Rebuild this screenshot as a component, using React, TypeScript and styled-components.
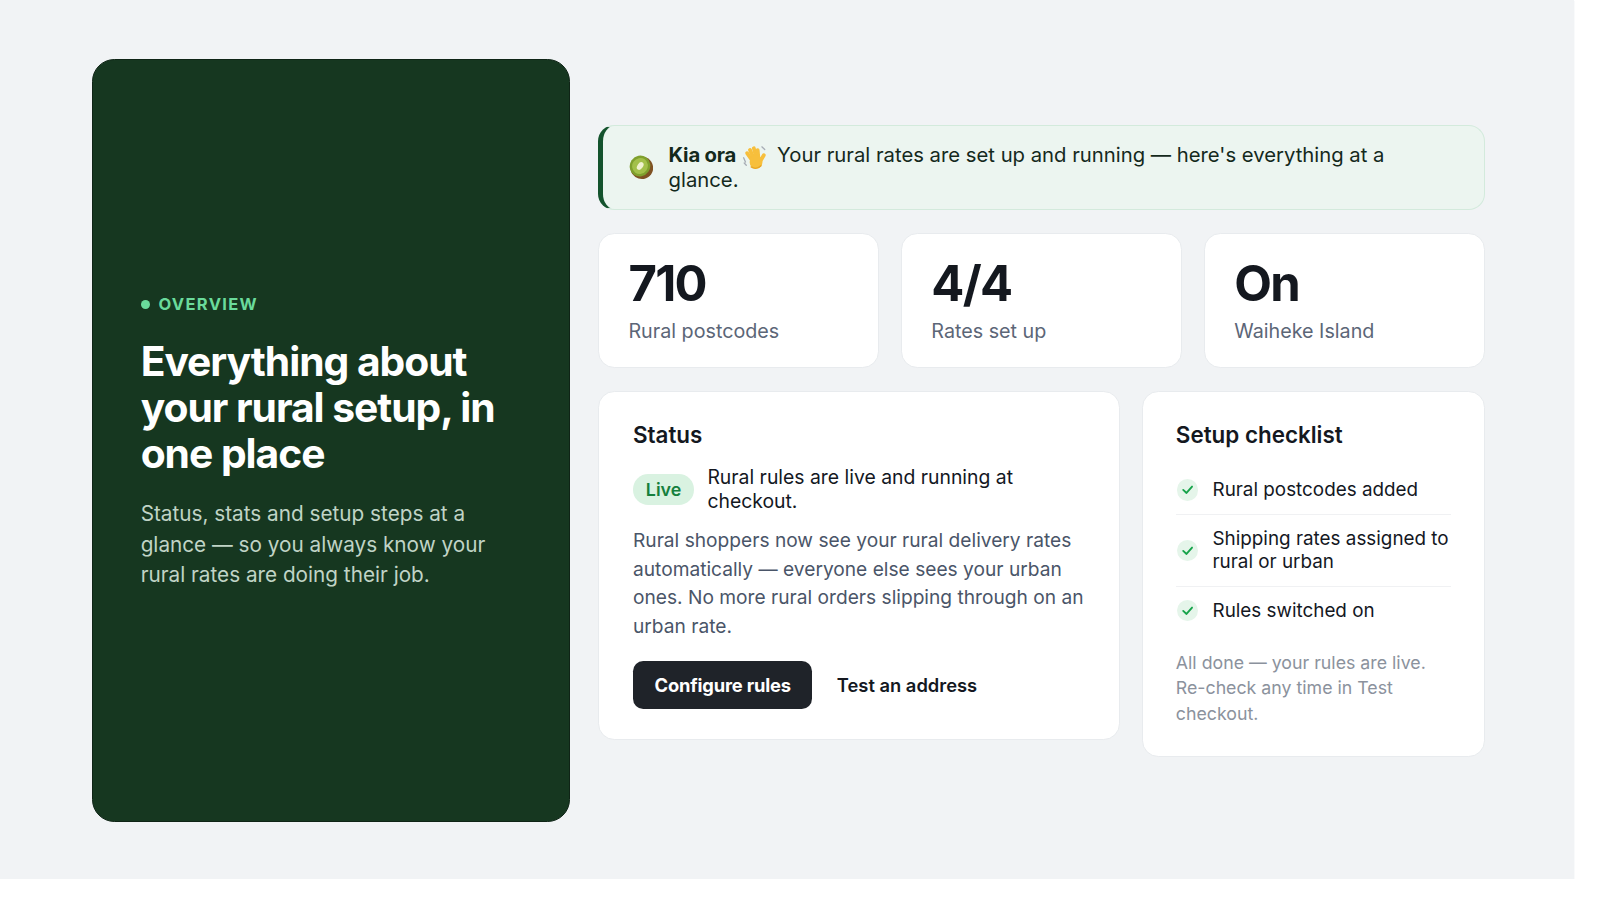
import React from "react";
import styled, { createGlobalStyle } from "styled-components";

const Global = createGlobalStyle`
  html, body { margin: 0; padding: 0; background: #fff; }
  body { font-family: Inter, "Noto Sans", sans-serif; color: #111827; }
  * { box-sizing: border-box; }
`;

const Page = styled.main`
  zoom: 1.0194;
  width: 1544.5px;
  height: 862.5px;
  background: #f1f3f5;
  box-shadow: 1px 1px 0 #f9fafb;
  padding: 2px 88px 0 90px;
  display: grid;
  grid-template-columns: 469px 870.5px;
  column-gap: 27px;
  align-items: center;
`;

const Hero = styled.section`
  height: 748px;
  background: #163720;
  border: 1px solid #0f2416;
  border-radius: 22px;
  padding: 2px 47px 0;
  display: flex;
  flex-direction: column;
  justify-content: center;
`;

const Eyebrow = styled.div`
  display: flex;
  align-items: center;
  gap: 8.5px;
  font-size: 16.2px;
  line-height: 22px;
  font-weight: 700;
  letter-spacing: 0.08em;
  color: #6adb9b;
  margin-bottom: 23px;
`;

const Dot = styled.span`
  width: 9px;
  height: 9px;
  border-radius: 50%;
  background: #6adb9b;
`;

const Heading = styled.h1`
  margin: 0 0 22px;
  font-size: 40px;
  line-height: 45px;
  font-weight: 700;
  letter-spacing: -0.025em;
  color: #fff;
`;

const Lede = styled.p`
  margin: 0;
  font-size: 20.35px;
  line-height: 29.6px;
  color: #c0d4c6;
`;

const Column = styled.div`
  margin-left: 1px;
  display: flex;
  flex-direction: column;
  gap: 22px;
`;

const Banner = styled.div`
  height: 84px;
  display: flex;
  align-items: center;
  gap: 15px;
  padding: 0 24px 0 25px;
  background: #ecf5f0;
  border: 1px solid #d3eadc;
  border-left: 5px solid #14532d;
  border-radius: 16px;
  font-size: 19.9px;
  color: #14291c;
`;

const BannerIcon = styled.svg`
  width: 24px;
  height: 24px;
  flex: none;
`;

const HandIcon = styled.svg`
  width: 24px;
  height: 24px;
  vertical-align: -3px;
  margin: -4px 5px -4px 0;
`;

const BannerText = styled.p`
  margin: 0;
  padding-top: 1px;
  line-height: 24px;
`;

const Strong = styled.strong`
  font-weight: 700;
  letter-spacing: -0.01em;
`;

const Stats = styled.div`
  display: grid;
  grid-template-columns: repeat(3, 1fr);
  gap: 22px;
`;

const Card = styled.div`
  background: #fff;
  border: 1px solid #e8ebee;
  border-radius: 16px;
`;

const StatCard = styled(Card)`
  height: 133px;
  padding: 21px 28.5px 0;
`;

const StatValue = styled.div`
  font-size: 48px;
  line-height: 56px;
  font-weight: 700;
  letter-spacing: -0.035em;
  color: #14181f;
`;

const StatLabel = styled.div`
  margin-top: 7px;
  font-size: 19.35px;
  line-height: 24px;
  color: #5c6677;
`;

const Lower = styled.div`
  display: grid;
  grid-template-columns: 511.5px 336px;
  gap: 22px;
  align-items: start;
`;

const StatusCard = styled(Card)`
  padding: 29px 33px 30px;
`;

const ChecklistCard = styled(Card)`
  padding: 29px 32px;
`;

const CardTitle = styled.h2<{ $gap: number }>`
  margin: 0 0 ${(p) => p.$gap}px;
  font-size: 22px;
  line-height: 28px;
  font-weight: 600;
  color: #14181f;
`;

const StatusRow = styled.div`
  display: flex;
  align-items: center;
  gap: 13px;
  font-size: 19px;
  line-height: 23px;
  color: #14181f;
  margin-bottom: 13px;
`;

const Pill = styled.span`
  flex: none;
  width: 60px;
  height: 30px;
  display: flex;
  align-items: center;
  justify-content: center;
  border-radius: 15px;
  background: #d9f2e1;
  color: #15803d;
  font-size: 17.5px;
  font-weight: 600;
`;

const Body = styled.p`
  margin: 0 0 20px;
  font-size: 18.8px;
  line-height: 28px;
  color: #4a5568;
`;

const Actions = styled.div`
  display: flex;
  align-items: center;
  gap: 24px;
`;

const PrimaryButton = styled.button`
  width: 176px;
  height: 47px;
  padding: 0;
  border: 0;
  border-radius: 10px;
  background: #1f2329;
  color: #fff;
  font: 700 18px Inter, sans-serif;
  letter-spacing: -0.01em;
`;

const LinkButton = styled.button`
  padding: 0;
  border: 0;
  background: none;
  color: #14181f;
  font: 600 18px Inter, sans-serif;
`;

const CheckList = styled.ul`
  list-style: none;
  margin: 0 0 15px;
  padding: 0;
`;

const CheckItem = styled.li`
  display: flex;
  align-items: center;
  gap: 14px;
  padding: 12px 0;
  font-size: 18.5px;
  line-height: 22.8px;
  color: #14181f;
  & + & {
    border-top: 1px solid #f0f1f3;
  }
`;

const CheckCircle = styled.span`
  flex: none;
  width: 21px;
  height: 21px;
  margin-left: 1px;
  border-radius: 50%;
  background: #e5f5ea;
  display: flex;
  align-items: center;
  justify-content: center;
`;

const Note = styled.p`
  margin: 0;
  font-size: 17.43px;
  line-height: 25px;
  color: #8b929d;
`;

const Kiwi = () => (
  <BannerIcon viewBox="0 0 24 24" role="img" aria-label="kiwi">
    <ellipse cx="12.500" cy="12.500" rx="11.300" ry="11" fill="#7f5223" transform="rotate(35 12.500 12.500)" />
    <ellipse cx="10.800" cy="10.800" rx="10" ry="10.400" fill="#7fa02d" transform="rotate(35 10.800 10.800)" />
    <ellipse cx="10.800" cy="10.800" rx="7.600" ry="8" fill="#a3c04a" transform="rotate(35 10.800 10.800)" />
    <ellipse cx="11" cy="10.800" rx="2.700" ry="4.200" fill="#f0f2d0" transform="rotate(35 11 10.800)" />
  </BannerIcon>
);

const Hand = () => (
  <HandIcon viewBox="0 0 24 24" role="img" aria-label="wave">
    <g stroke="#f7bf3c" strokeWidth="3.7" strokeLinecap="round" fill="none">
      <path d="M10 15 5 8" />
      <path d="M11.500 13 7.800 4.800" />
      <path d="M14 12 11.600 3.200" />
      <path d="M16 12 15.400 5" />
      <path d="M18.200 15.500 21.400 10" />
    </g>
    <ellipse cx="13.800" cy="16.600" rx="6.300" ry="6.600" fill="#f7bf3c" />
    <path d="M9 21.500c3 2 7 1.600 9.600-1.200" stroke="#e9a523" strokeWidth="1.400" strokeLinecap="round" fill="none" />
    <path d="M1.600 12.500 3.400 16.800M4.200 19.800 2.200 17.700M19.500 1.800 22.300 4.400" stroke="#a7adb5" strokeWidth="1.300" strokeLinecap="round" />
  </HandIcon>
);

const Check = () => (
  <svg width="13" height="13" viewBox="0 0 24 24" fill="none" stroke="#16a34a" strokeWidth="3.400" strokeLinecap="round" strokeLinejoin="round">
    <path d="M4 12.500 10 18 20 6.500" />
  </svg>
);

const stats = [
  { value: "710", label: "Rural postcodes" },
  { value: "4/4", label: "Rates set up" },
  { value: "On", label: "Waiheke Island" },
];

const checks = ["Rural postcodes added", "Shipping rates assigned to rural or urban", "Rules switched on"];

export default function App() {
  return (
    <>
      <Global />
      <Page>
        <Hero>
          <Eyebrow>
            <Dot />
            OVERVIEW
          </Eyebrow>
          <Heading>Everything about your rural setup, in one place</Heading>
          <Lede>Status, stats and setup steps at a glance — so you always know your rural rates are doing their job.</Lede>
        </Hero>
        <Column>
          <Banner>
            <Kiwi />
            <BannerText>
              <Strong>Kia ora</Strong> <Hand /> Your rural rates are set up and running — here's everything at a glance.
            </BannerText>
          </Banner>
          <Stats>
            {stats.map((s) => (
              <StatCard key={s.label}>
                <StatValue>{s.value}</StatValue>
                <StatLabel>{s.label}</StatLabel>
              </StatCard>
            ))}
          </Stats>
          <Lower>
            <StatusCard>
              <CardTitle $gap={16}>Status</CardTitle>
              <StatusRow>
                <Pill>Live</Pill>
                <span>Rural rules are live and running at checkout.</span>
              </StatusRow>
              <Body>Rural shoppers now see your rural delivery rates automatically — everyone else sees your urban ones. No more rural orders slipping through on an urban rate.</Body>
              <Actions>
                <PrimaryButton>Configure rules</PrimaryButton>
                <LinkButton>Test an address</LinkButton>
              </Actions>
            </StatusCard>
            <ChecklistCard>
              <CardTitle $gap={16}>Setup checklist</CardTitle>
              <CheckList>
                {checks.map((c) => (
                  <CheckItem key={c}>
                    <CheckCircle>
                      <Check />
                    </CheckCircle>
                    <span>{c}</span>
                  </CheckItem>
                ))}
              </CheckList>
              <Note>All done — your rules are live. Re-check any time in Test checkout.</Note>
            </ChecklistCard>
          </Lower>
        </Column>
      </Page>
    </>
  );
}
